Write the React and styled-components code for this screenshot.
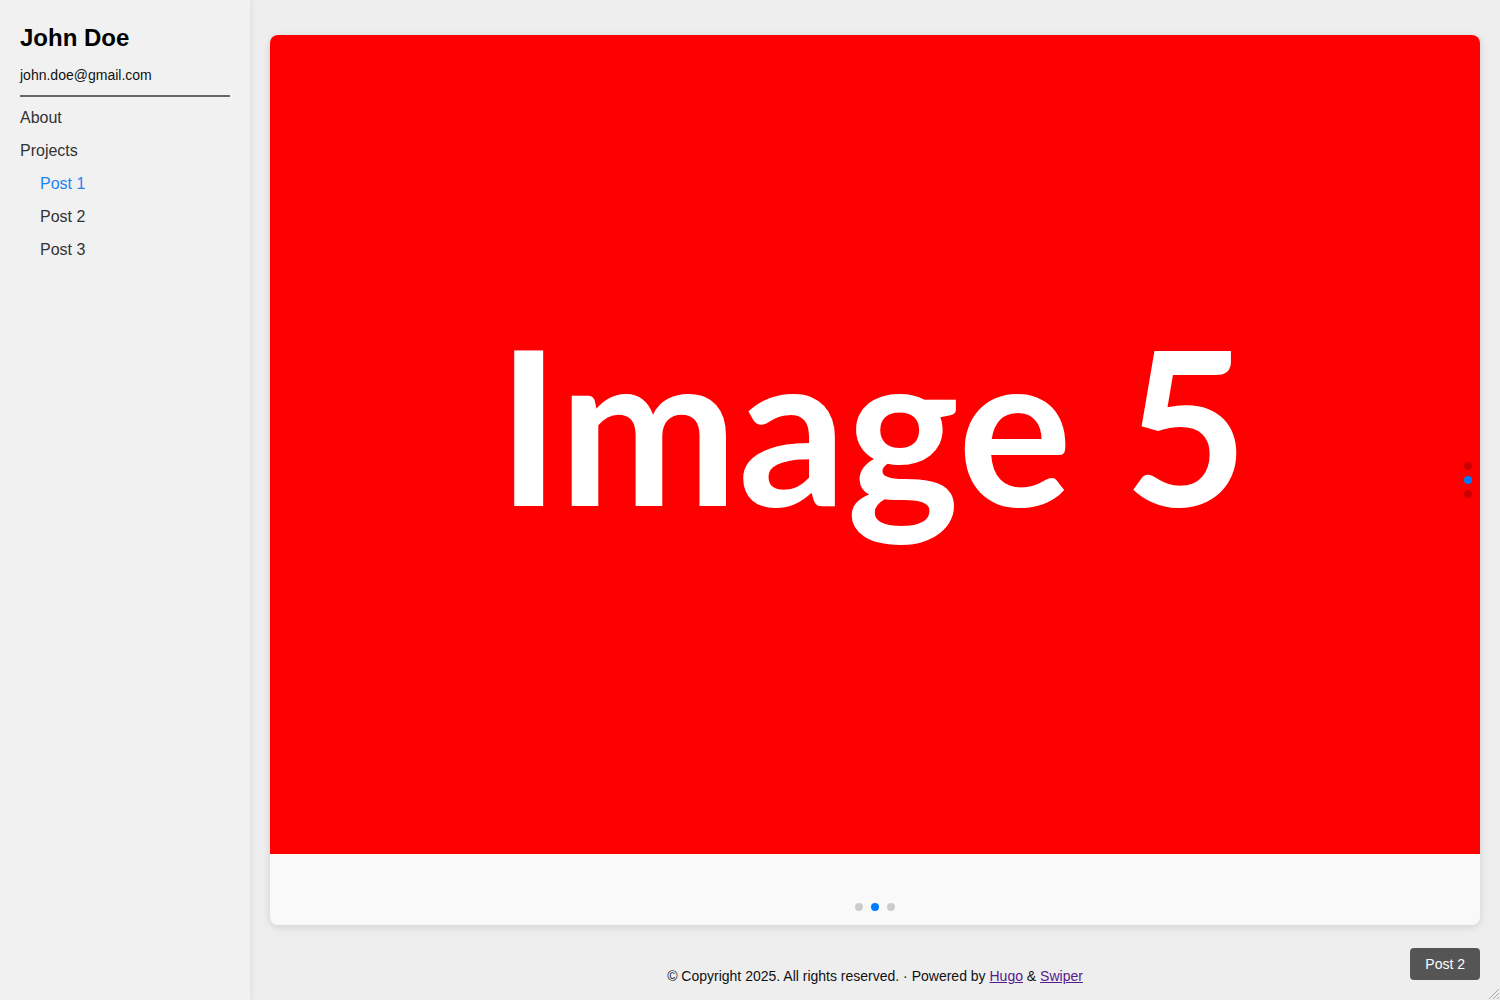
import React from "react";
import styled, { createGlobalStyle } from "styled-components";

const GlobalStyle = createGlobalStyle`
  html, body {
    margin: 0;
    padding: 0;
    height: 100%;
    background: #eeeeee;
    font-family: "Liberation Sans", Arial, sans-serif;
  }
  #root {
    height: 100%;
  }
`;

const posts = ["Post 1", "Post 2", "Post 3"];

const App = () => {
  return (
    <>
      <GlobalStyle />
      <Layout>
        <Sidebar>
          <Name>John Doe</Name>
          <Email>john.doe@gmail.com</Email>
          <Divider />
          <Nav>
            <NavItem>About</NavItem>
            <NavItem>Projects</NavItem>
            {posts.map((p, i) => (
              <NavItem key={p} $sub $active={i === 0}>
                {p}
              </NavItem>
            ))}
          </Nav>
        </Sidebar>
        <Main>
          <Card>
            <Slide>
              <SlideText>Image 5</SlideText>
            </Slide>
            <CardFooter>
              <Dot $tone="light" />
              <Dot $tone="active" />
              <Dot $tone="light" />
            </CardFooter>
            <VerticalDots>
              <Dot $tone="dark" />
              <Dot $tone="active" />
              <Dot $tone="dark" />
            </VerticalDots>
          </Card>
          <Footer>
            © Copyright 2025. All rights reserved. · Powered by{" "}
            <a href="#hugo">Hugo</a> &amp; <a href="#swiper">Swiper</a>
          </Footer>
          <NextButton>Post 2</NextButton>
          <Grip width="14" height="14" viewBox="0 0 14 14">
            <path d="M13 3 L3 13 M13 7 L7 13 M13 11 L11 13" stroke="#aaa" strokeWidth="1" />
          </Grip>
        </Main>
      </Layout>
    </>
  );
};
export default App;

const Layout = styled.div`
  display: flex;
  min-height: 1000px;
`;

const Sidebar = styled.aside`
  width: 250px;
  flex-shrink: 0;
  box-sizing: border-box;
  padding: 23px 20px;
  background: #f1f1f1;
  box-shadow: 2px 0 5px rgba(0, 0, 0, 0.06);
  position: relative;
  z-index: 1;
`;

const Name = styled.h1`
  margin: 0;
  font-size: 24px;
  line-height: 30px;
  font-weight: bold;
  color: #000;
`;

const Email = styled.div`
  margin-top: 14px;
  font-size: 14px;
  color: #111;
`;

const Divider = styled.hr`
  margin: 12px 0 0;
  border: none;
  border-top: 2px solid #666;
`;

const Nav = styled.nav`
  display: flex;
  flex-direction: column;
  gap: 15px;
  margin-top: 12px;
`;

const NavItem = styled.div`
  font-size: 16px;
  line-height: 18px;
  color: ${(p) => (p.$active ? "#1a85f0" : "#333")};
  padding-left: ${(p) => (p.$sub ? "20px" : "0")};
`;

const Main = styled.main`
  flex: 1;
  padding: 35px 20px 0;
  position: relative;
  display: flex;
  flex-direction: column;
`;

const Card = styled.section`
  height: 890px;
  border-radius: 8px;
  background: #f9f9f9;
  box-shadow: 0 2px 8px rgba(0, 0, 0, 0.12);
  overflow: hidden;
  display: flex;
  flex-direction: column;
  position: relative;
`;

const Slide = styled.div`
  height: 819px;
  background: #ff0000;
  display: flex;
  align-items: center;
  justify-content: center;
`;

const SlideText = styled.div`
  font-family: Lato, "Liberation Sans", sans-serif;
  font-weight: bold;
  font-size: 214px;
  line-height: 1;
  color: #fff;
  margin-bottom: 42px;
  margin-right: 5px;
`;

const VerticalDots = styled.div`
  position: absolute;
  right: 8px;
  top: 50%;
  transform: translateY(-50%);
  display: flex;
  flex-direction: column;
  gap: 6px;
`;

const Dot = styled.span`
  width: 8px;
  height: 8px;
  border-radius: 50%;
  background: ${(p) =>
    p.$tone === "active" ? "#007aff" : p.$tone === "dark" ? "#cc0000" : "#cccccc"};
`;

const CardFooter = styled.div`
  flex: 1;
  display: flex;
  justify-content: center;
  align-items: flex-end;
  gap: 8px;
  padding-bottom: 14px;
`;

const Footer = styled.footer`
  margin-top: 43px;
  text-align: center;
  font-size: 14px;
  color: #111;
  a {
    color: #551a8b;
  }
`;

const NextButton = styled.button`
  position: absolute;
  right: 20px;
  bottom: 20px;
  background: #555;
  color: #fff;
  border: none;
  border-radius: 4px;
  padding: 0 15px;
  height: 32px;
  font-family: "Liberation Sans", Arial, sans-serif;
  font-size: 14px;
`;

const Grip = styled.svg`
  position: absolute;
  right: 0;
  bottom: 0;
`;
